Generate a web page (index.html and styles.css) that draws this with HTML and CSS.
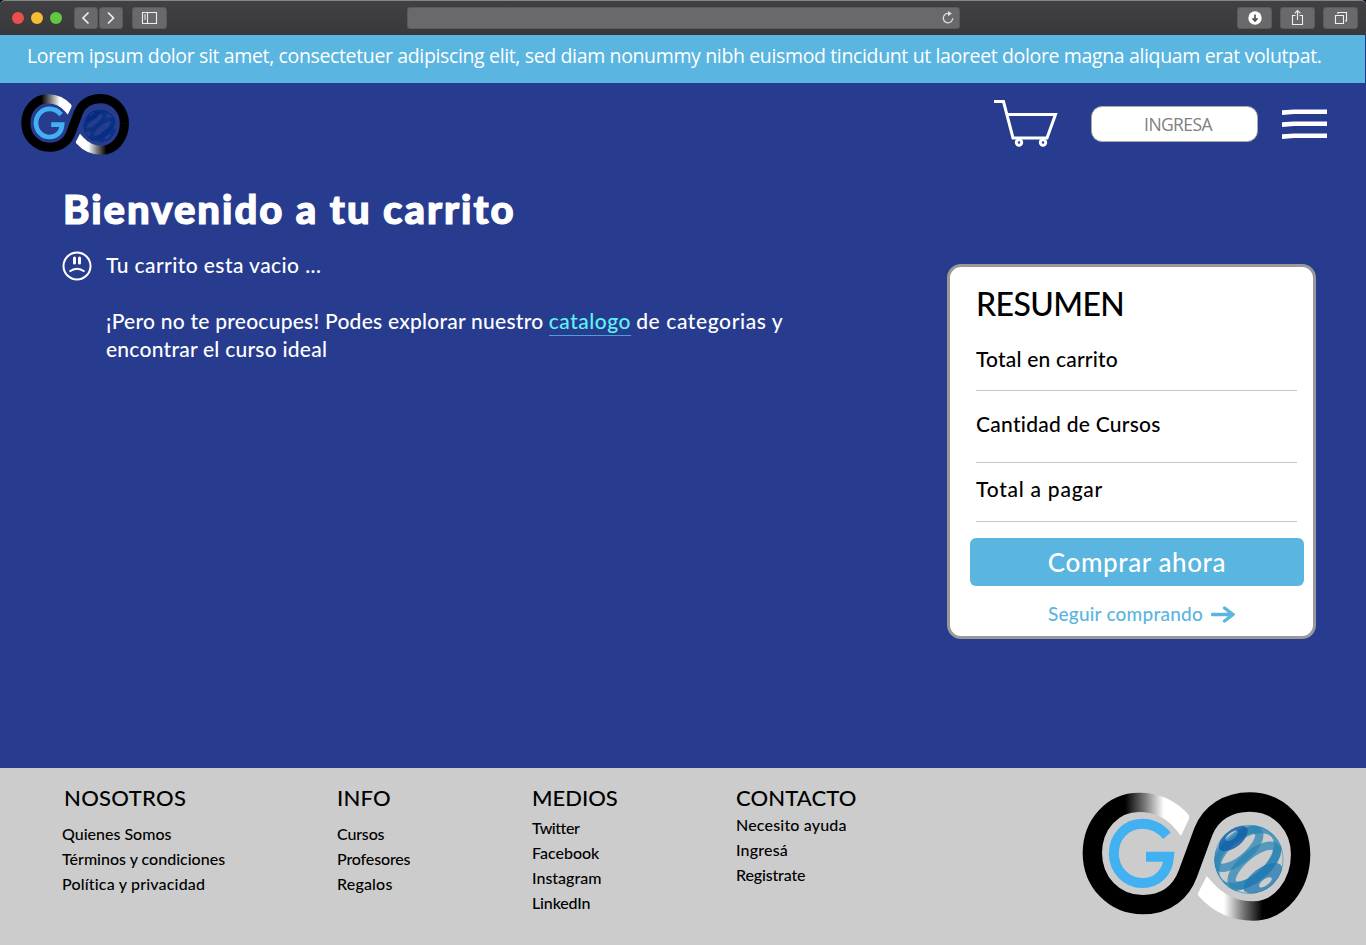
FILE: index.html
```html
<!DOCTYPE html>
<html lang="es">
<head>
<meta charset="utf-8">
<title>Carrito</title>
<link rel="stylesheet" href="styles.css">
</head>
<body>
<svg class="defs" aria-hidden="true">
  <defs>
    <linearGradient id="shine-top" gradientUnits="userSpaceOnUse" x1="165" y1="0" x2="282" y2="0">
      <stop offset="0" stop-color="#000"/><stop offset=".5" stop-color="#777"/><stop offset="1" stop-color="#fff"/>
    </linearGradient>
    <linearGradient id="shine-bottom" gradientUnits="userSpaceOnUse" x1="462" y1="0" x2="578" y2="0">
      <stop offset="0" stop-color="#fff"/><stop offset=".5" stop-color="#777"/><stop offset="1" stop-color="#000"/>
    </linearGradient>
    <clipPath id="sphere"><circle cx="537" cy="238" r="104"/></clipPath>
    <clipPath id="cut-top"><path d="M0 0H340L358 115L333 167L300 230H0z"/></clipPath>
    <clipPath id="cut-bottom"><path d="M440 230L412 285L383 341L400 440H760V200z"/></clipPath>
    <symbol id="logo" viewBox="30 30 700 400">
      <g fill="none" stroke-width="58">
        <path clip-path="url(#cut-bottom)" stroke="url(#shine-bottom)" d="M692 222C692 315 630 393 550 393C490 393 445 370 409 330L388 307"/>
        <path stroke="#000" d="M67 218C67 306 132 374 218 374C292 374 335 332 354 280L400 155C422 100 472 66 540 66C628 66 692 136 692 224"/>
        <path clip-path="url(#cut-top)" stroke="url(#shine-top)" d="M67 220C67 133 128 67 207 67C264 67 307 90 340 130L356 150"/>
      </g>
      <path fill="none" stroke="#41b1f2" stroke-width="30" d="M291 167C272 145 246 131 217 131C168 131 131.500 171 131.500 220C131.500 269 168 309 217 309C262 309 294 277 297 230H228"/>
      <g clip-path="url(#sphere)" fill="none">
        <g class="globe-rings" stroke-width="25">
          <ellipse cx="503" cy="206" rx="80" ry="33" transform="rotate(-40 503 206)"/>
          <ellipse cx="530" cy="234" rx="110" ry="66" transform="rotate(-40 530 234)"/>
          <ellipse cx="553" cy="257" rx="84" ry="34" transform="rotate(-40 553 257)"/>
        </g>
        <path class="globe-cap" fill-rule="evenodd" d="M447 207C440 178 482 138 514 137C548 137 532 177 505 197C484 213 455 219 447 207ZM467 181C471 186 484 182 494 173C504 164 507 155 500 152C493 149 464 167 467 181Z"/>
        <path class="globe-base" fill-rule="evenodd" d="M522 333C514 298 575 247 618 249C647 251 640 288 616 314C592 339 552 351 522 333ZM568 320C576 331 610 305 605 294C596 284 562 309 568 320Z"/>
        <circle class="globe-edge" cx="537" cy="238" r="103" stroke-width="4"/>
      </g>
    </symbol>
  </defs>
</svg>

<div class="browser">
  <div class="lights"><i class="red"></i><i class="yellow"></i><i class="green"></i></div>
  <div class="nav">
    <span class="key"><svg width="24" height="22" viewBox="0 0 24 22"><path d="M14.500 5.500L9 11l5.500 5.500"/></svg></span>
    <span class="key"><svg width="24" height="22" viewBox="0 0 24 22"><path d="M9 5.500L14.500 11L9 16.500"/></svg></span>
  </div>
  <span class="key wide"><svg class="thin" width="35" height="22" viewBox="0 0 35 22"><path d="M10.500 5.500h14v11h-14zM15.500 5.500v11M12 8h2M12 10h2M12 12h2"/></svg></span>
  <div class="address"><svg class="thin" width="14" height="14" viewBox="0 0 14 14"><path d="M7.500 2.500A4.700 4.700 0 1 0 11.700 7.300"/><path class="fill" d="M7 0l4 2.600L7 5.300z"/></svg></div>
  <div class="actions">
    <span class="key wide"><svg width="35" height="22" viewBox="0 0 35 22"><circle cx="18" cy="11" r="6.700" fill="#fff" stroke="none"/><path stroke="#505052" d="M18 7.500v6M15.500 11.200l2.500 2.800l2.500-2.800"/></svg></span>
    <span class="key wide"><svg class="thin" width="35" height="22" viewBox="0 0 35 22"><path d="M15.500 8.500h-3v9h10v-9h-3M17.500 13V3.500M14.700 6.300l2.800-2.800l2.800 2.800"/></svg></span>
    <span class="key wide"><svg class="thin" width="35" height="22" viewBox="0 0 35 22"><path d="M12.500 8.500h8v8h-8zM15 7V5.500h8.500v8.500H22"/></svg></span>
  </div>
</div>

<div class="banner">Lorem ipsum dolor sit amet, consectetuer adipiscing elit, sed diam nonummy nibh euismod tincidunt ut laoreet dolore magna aliquam erat volutpat.</div>

<header class="header">
  <svg class="logo-small"><use href="#logo"/></svg>
  <div class="tools">
    <svg class="cart" width="64" height="48" viewBox="0 0 64 48"><path d="M0 2.500h9.500L19 39h34L61.500 15.500H13"/><circle cx="25" cy="43.500" r="2.700"/><circle cx="49" cy="43.500" r="2.700"/></svg>
    <button class="login">INGRESA</button>
    <svg class="menu" width="45" height="31" viewBox="0 0 45 31"><path d="M0 1.200L12 .4H45V5H12L0 6zM0 13.200L12 12.400H45V17H12L0 18zM0 25.200L12 24.400H45V29H12L0 30z"/></svg>
  </div>
</header>

<main class="main">
  <section class="welcome">
    <h1>Bienvenido a tu carrito</h1>
    <div class="empty">
      <svg class="sad" width="30" height="30" viewBox="0 0 30 30"><circle cx="15" cy="15" r="13.500"/><path d="M7.500 20.500Q15 15 22.500 20.500"/><path class="eyes" d="M12.500 7v5M17.500 7v5"/></svg>
      <div class="copy">
        <p class="notice">Tu carrito esta vacio ...</p>
        <p><span class="lead">¡Pero no te preocupes! Podes explorar nuestro</span> <a class="catalog">catalogo</a> <span class="rest">de categorias y</span><br><span class="lead">encontrar el curso ideal</span></p>
      </div>
    </div>
  </section>

  <aside class="summary">
    <h2>RESUMEN</h2>
    <div class="row first">Total en carrito</div>
    <div class="row second">Cantidad de Cursos</div>
    <div class="row third">Total a pagar</div>
    <button class="buy">Comprar ahora</button>
    <a class="continue">Seguir comprando <svg width="24" height="17" viewBox="0 0 24 17"><path d="M1.500 8.500H21M13.500 2L22 8.500L13.500 15"/></svg></a>
  </aside>
</main>

<footer class="footer">
  <nav class="col about"><h3>NOSOTROS</h3><a class="flat">Quienes Somos</a><a class="flat">Términos y condiciones</a><a class="loose">Política y privacidad</a></nav>
  <nav class="col info"><h3>INFO</h3><a class="tight">Cursos</a><a class="tight">Profesores</a><a class="loose">Regalos</a></nav>
  <nav class="col media"><h3>MEDIOS</h3><a class="tighter">Twitter</a><a>Facebook</a><a>Instagram</a><a class="tight">LinkedIn</a></nav>
  <nav class="col contact"><h3>CONTACTO</h3><a class="loose">Necesito ayuda</a><a class="loose">Ingresá</a><a class="tight">Registrate</a></nav>
  <svg class="logo-large"><use href="#logo"/></svg>
</footer>
</body>
</html>
```
FILE: styles.css
```css
* { box-sizing: border-box; margin: 0; padding: 0; }
body {
  height: 945px;
  display: flex;
  flex-direction: column;
  overflow: hidden;
  background: #273c8f;
  color: #fff;
  font-family: Lato, sans-serif;
  font-weight: 500;
  font-variant-ligatures: none;
}
.defs { position: absolute; width: 0; height: 0; }
button { border: 0; }

.browser {
  height: 35px;
  flex: none;
  display: flex;
  align-items: center;
  padding: 0 8px 1px 12px;
  background: linear-gradient(#414143, #39393b);
  border-top: 1px solid #858585;
  border-radius: 5px 5px 0 0;
  box-shadow: 0 -6px 0 6px #111;
  clip-path: inset(0);
}
.lights { display: flex; gap: 7px; }
.lights i { width: 12px; height: 12px; border-radius: 50%; }
.red { background: #ea4f4c; }
.yellow { background: #f5bd31; }
.green { background: #60cb42; }
.nav { display: flex; gap: 1px; margin: 0 9px 0 12px; }
.key {
  width: 24px;
  height: 22px;
  border-radius: 3px;
  background: #69696b;
  border: 1px solid #5a5a5c;
}
.key.wide { width: 35px; }
.key svg { display: block; margin: -1px; fill: none; stroke: #eee; stroke-width: 1.7; }
.key svg.thin { stroke-width: 1.1; }
.address {
  width: 553px;
  height: 22px;
  margin-left: 240px;
  padding: 3px 4px;
  display: flex;
  justify-content: flex-end;
  background: #69696b;
  border: 1px solid #5a5a5c;
  border-radius: 3px;
}
.address svg { fill: none; stroke: #ddd; stroke-width: 1.3; }
.address .fill { fill: #ddd; stroke: none; }
.actions { display: flex; gap: 8px; margin-left: auto; }

.banner {
  width: 1365px;
  height: 48px;
  flex: none;
  padding-left: 27px;
  background: #5ab5e0;
  font: 400 19.5px/42px "Open Sans", sans-serif;
  letter-spacing: -.36px;
  white-space: nowrap;
}

.header {
  height: 90px;
  flex: none;
  display: flex;
  justify-content: space-between;
  padding: 10px 39px 0 20.4px;
}
.logo-small {
  width: 110.4px;
  height: 63.1px;
  --ring: #06307f;
  --cap: #052a80;
  --base: #052f86;
}
.tools { display: flex; }
.cart { margin-top: 6px; fill: none; stroke: #fff; stroke-width: 3; }
.login {
  width: 167px;
  height: 36px;
  margin: 13px 24px 0 33px;
  padding: 0 0 1px 7px;
  border: 1px solid #aaa;
  border-radius: 11px;
  background: #fff;
  color: #808080;
  font: 400 17.5px "Open Sans", sans-serif;
  letter-spacing: -.6px;
}
.menu { margin-top: 16px; fill: #fff; }

.main {
  flex: 1;
  display: flex;
  justify-content: space-between;
  padding: 0 50px 0 62px;
}
.welcome { padding-top: 12px; }
h1 {
  margin-left: 1px;
  font-size: 40px;
  line-height: 48px;
  font-weight: 900;
  letter-spacing: 2px;
  -webkit-text-stroke: 1.2px #fff;
}
.empty { display: flex; gap: 14px; margin-top: 17px; font-size: 21px; line-height: 28px; white-space: nowrap; }
.copy { padding-top: 1px; }
.sad { margin-top: 1px; fill: none; stroke: #fff; stroke-width: 2; }
.sad .eyes { stroke-width: 3; stroke-linecap: round; }
.notice { margin-bottom: 28px; letter-spacing: .42px; }
.lead { letter-spacing: .25px; }
.rest { letter-spacing: .6px; }
.catalog { color: #5ff3f5; letter-spacing: .5px; border-bottom: 1px solid #4a9fd8; padding-bottom: 2px; }

.summary {
  width: 369px;
  height: 375px;
  margin-top: 91px;
  padding: 17px 9px 0 20px;
  display: flex;
  flex-direction: column;
  background: #fff;
  border: 3px solid #999;
  border-radius: 14px;
  color: #000;
}
h2 { margin-left: 6px; font-size: 32px; line-height: 40px; font-weight: 500; letter-spacing: -.6px; }
.row { margin: 0 7px 0 6px; font-size: 21px; line-height: 28px; border-bottom: 1px solid #c6c6c6; }
.first { height: 67px; padding-top: 21px; letter-spacing: .2px; }
.second { height: 72px; padding-top: 19px; letter-spacing: .27px; }
.third { height: 59px; padding-top: 12px; letter-spacing: .75px; }
.buy {
  height: 48px;
  margin-top: 16px;
  border-radius: 6px;
  background: #5ab5e0;
  color: #fff;
  font: 500 26px/48px Lato, sans-serif;
  letter-spacing: .6px;
}
.continue {
  display: flex;
  align-items: center;
  gap: 8px;
  margin: 16px 0 0 78px;
  color: #5ab5e0;
  font-size: 19px;
  line-height: 24px;
  letter-spacing: .22px;
}
.continue svg { fill: none; stroke: #5ab5e0; stroke-width: 3.4; stroke-linecap: round; }

.footer {
  height: 177px;
  flex: none;
  display: grid;
  grid-template-columns: 275px 195px 204px 344px 234px;
  padding: 16px 0 0 62px;
  background: #ccc;
  color: #000;
}
.col { display: flex; flex-direction: column; font-size: 16px; line-height: 25px; }
h3 { font-size: 22px; line-height: 28px; font-weight: 500; }
.about h3 { margin: 0 0 9px 2px; letter-spacing: .3px; }
.info h3 { margin-bottom: 9px; letter-spacing: .2px; }
.media h3 { margin-bottom: 3px; }
.contact h3 { margin-bottom: 0; letter-spacing: .1px; }
.loose { letter-spacing: .18px; }
.flat { letter-spacing: 0; }
.tight { letter-spacing: -.15px; }
.tighter { letter-spacing: -.45px; }
.logo-large {
  width: 233.3px;
  height: 133.3px;
  margin-top: 6px;
  --ring: #2583b4;
  --cap: #1460a8;
  --base: #2277b3;
}
.globe-rings { stroke: var(--ring); stroke-opacity: .72; }
.globe-cap { fill: var(--cap); fill-opacity: .85; }
.globe-base { fill: var(--base); fill-opacity: .75; }
.globe-edge { stroke: var(--ring); stroke-opacity: .6; }
```
